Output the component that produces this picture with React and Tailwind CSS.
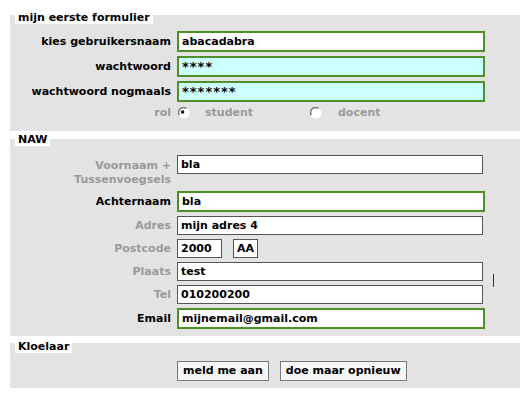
import React from 'react';

const Radio = ({ checked }) => (
  <svg width="12" height="12" viewBox="0 0 12 12" className="shrink-0">
    <circle cx="6" cy="6" r="5.6" fill="#fff" />
    <path d="M1.3 8 A5 5 0 0 1 8.6 1.5" stroke="#7a7a7a" strokeWidth="1.5" fill="none" />
    {checked && <circle cx="4.6" cy="5" r="1.7" fill="#000" />}
  </svg>
);

const App = () => {
  return (
    <div className="min-h-[399px] w-[529px] bg-white pt-[12px] font-['DejaVu_Sans',Verdana,sans-serif] text-[11px] leading-[14px] font-bold text-black">
      {/* mijn eerste formulier */}
      <div className="ml-[10px] flex w-[510px] flex-col">
        <div className="relative z-10 ml-[5px] self-start bg-white px-[3px] leading-[12px]">mijn eerste formulier</div>
        <div className="-mt-[9px] bg-[#e3e3e3] pt-[16px] pb-[11px]">
          <div className="grid grid-cols-[161px_308px] items-center gap-x-[6px] gap-y-[4px]">
            <label className="text-right">kies gebruikersnaam</label>
            <input readOnly value="abacadabra" className="h-[21px] w-[308px] border-2 border-[#4d8f29] bg-white px-[3px] outline-none" />
            <label className="text-right">wachtwoord</label>
            <input readOnly value="****" className="h-[21px] w-[308px] border-2 border-[#4d8f29] bg-[#ccffff] px-[3px] text-[13px] tracking-[1px] outline-none" />
            <label className="text-right">wachtwoord nogmaals</label>
            <input readOnly value="*******" className="h-[21px] w-[308px] border-2 border-[#4d8f29] bg-[#ccffff] px-[3px] text-[13px] tracking-[1px] outline-none" />
            <span className="text-right text-[#999]">rol</span>
            <div className="flex h-[14px] items-center text-[#999]">
              <span className="ml-[1px]"><Radio checked /></span>
              <span className="ml-[15px] w-[105px]">student</span>
              <Radio />
              <span className="ml-[16px]">docent</span>
            </div>
          </div>
        </div>
      </div>

      {/* NAW */}
      <div className="mt-[3px] ml-[10px] flex w-[510px] flex-col">
        <div className="relative z-10 ml-[5px] self-start bg-white px-[3px] leading-[12px]">NAW</div>
        <div className="relative -mt-[7px] bg-[#e3e3e3] pt-[16px] pb-[7px]">
          <div className="grid grid-cols-[161px_308px] items-center gap-x-[6px] gap-y-[4px]">
            <label className="self-start pt-[4px] text-right text-[#999]">
              Voornaam +<br />Tussenvoegsels
            </label>
            <input readOnly value="bla" className="h-[19px] w-[306px] self-start border border-[#555] bg-white px-[3px] outline-none" />
            <label className="text-right">Achternaam</label>
            <input readOnly value="bla" className="h-[21px] w-[308px] border-2 border-[#4d8f29] bg-white px-[3px] outline-none" />
            <label className="text-right text-[#999]">Adres</label>
            <input readOnly value="mijn adres 4" className="h-[19px] w-[306px] border border-[#555] bg-white px-[3px] outline-none" />
            <label className="text-right text-[#999]">Postcode</label>
            <div className="flex gap-[11px]">
              <input readOnly value="2000" className="h-[19px] w-[45px] border border-[#555] bg-white px-[3px] outline-none" />
              <input readOnly value="AA" className="h-[19px] w-[25px] border border-[#555] bg-white px-[3px] outline-none" />
            </div>
            <label className="text-right text-[#999]">Plaats</label>
            <input readOnly value="test" className="h-[19px] w-[306px] border border-[#555] bg-white px-[3px] outline-none" />
            <label className="text-right text-[#999]">Tel</label>
            <input readOnly value="010200200" className="h-[19px] w-[306px] border border-[#555] bg-white px-[3px] outline-none" />
            <label className="text-right">Email</label>
            <input readOnly value="mijnemail@gmail.com" className="h-[21px] w-[308px] border-2 border-[#4d8f29] bg-white px-[3px] outline-none" />
          </div>
          <div className="absolute top-[135px] left-[483px] h-[13px] w-px bg-[#333]" />
        </div>
      </div>

      {/* Kloelaar */}
      <div className="mt-[5px] ml-[10px] flex w-[510px] flex-col">
        <div className="relative z-10 ml-[5px] self-start bg-white px-[3px] leading-[12px]">Kloelaar</div>
        <div className="-mt-[10px] flex gap-[11px] bg-[#e3e3e3] pt-[18px] pb-[7px] pl-[167px]">
          <button className="h-[20px] border border-[#777] bg-[#f5f5f5] px-[5px]">meld me aan</button>
          <button className="h-[20px] border border-[#777] bg-[#f5f5f5] px-[5px]">doe maar opnieuw</button>
        </div>
      </div>
    </div>
  );
};

export default App;
